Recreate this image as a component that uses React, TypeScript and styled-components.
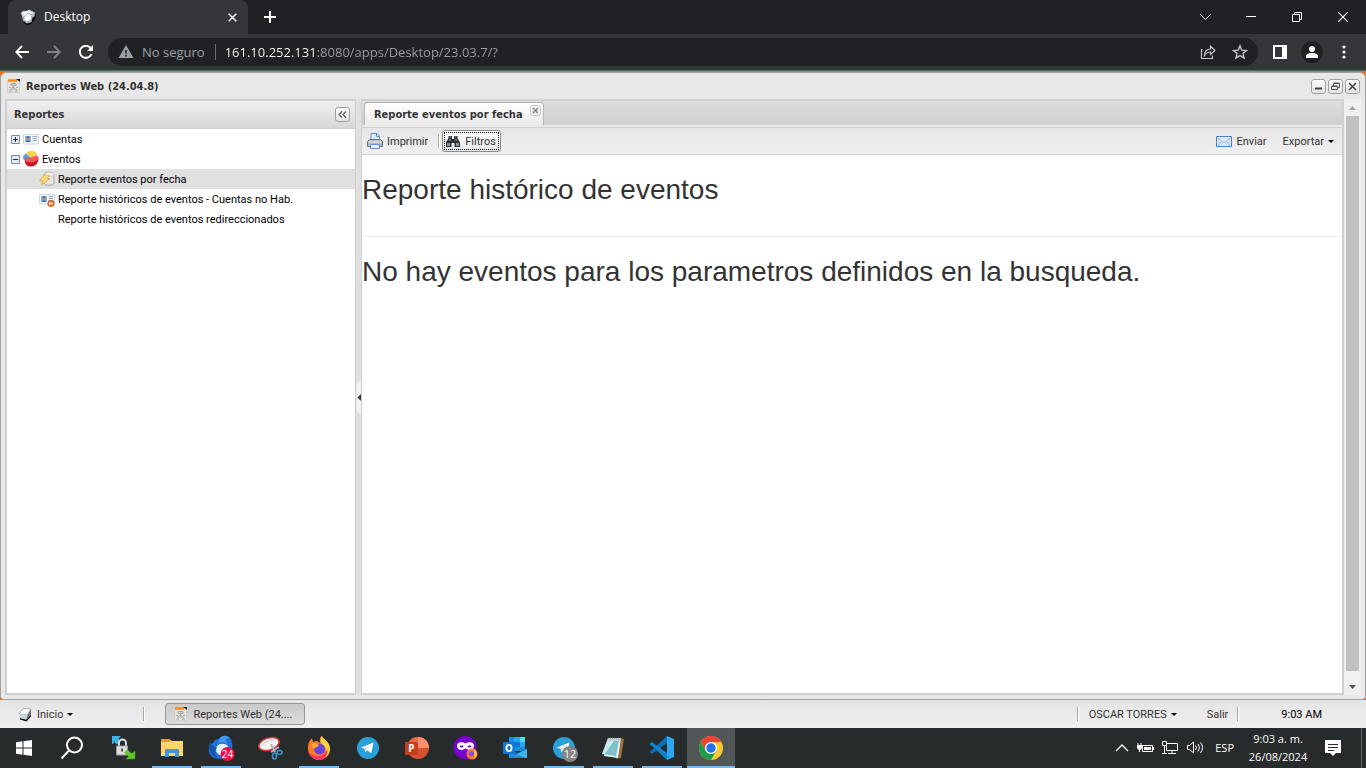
import React from "react";
import styled, { createGlobalStyle, css } from "styled-components";

const ui = `Roboto, Tahoma, "Noto Sans", sans-serif`;
const uiBold = `"DejaVu Sans Condensed", "DejaVu Sans", sans-serif`;
const chromeFont = `"Open Sans", "Noto Sans", sans-serif`;

const GlobalStyle = createGlobalStyle`
  *, *::before, *::after { box-sizing: border-box; }
  body { margin: 0; background: #ff6a10; }
  button { border: 0; padding: 0; background: none; color: inherit; font: inherit; cursor: pointer; }
  svg { display: block; flex: none; }
`;

const Screen = styled.div`
  min-height: 100vh;
  display: flex;
  flex-direction: column;
  font: 11px/16px ${ui};
  color: #333;
`;

/* ---------- browser ---------- */

const TabStrip = styled.header`
  height: 34px;
  display: flex;
  padding-left: 8px;
  background: #202124;
  color: #fff;
  font-family: ${chromeFont};
`;

const BrowserTab = styled.div`
  width: 240px;
  display: flex;
  align-items: center;
  gap: 8px;
  padding: 0 10px 0 12px;
  border-radius: 8px 8px 0 0;
  background: #35363a;
  font-size: 12px;
  & > span { flex: 1; }
`;

const ChromeButton = styled.button<{ $w?: number }>`
  width: ${(p) => p.$w ?? 32}px;
  display: flex;
  align-items: center;
  justify-content: center;
`;

const Spacer = styled.div`
  flex: 1;
`;

const BrowserBar = styled.div`
  height: 37px;
  display: flex;
  align-items: stretch;
  padding: 0 6px;
  background: #35363a;
  border-bottom: 1px solid #56616a;
  font-family: ${chromeFont};
`;

const AddressBar = styled.div`
  flex: 1;
  height: 28px;
  margin: 4px 6px 0;
  padding: 0 2px 0 10px;
  display: flex;
  align-items: center;
  border-radius: 14px;
  background: #202124;
  color: #9aa0a6;
  font-size: 13px;
`;

const Insecure = styled.button`
  display: flex;
  align-items: center;
  gap: 8px;
`;

const AddressInput = styled.input`
  flex: 1;
  min-width: 0;
  height: 16px;
  margin-left: 10px;
  padding: 0 0 0 9px;
  border: 0;
  border-left: 1px solid #6b6e72;
  outline: 0;
  color: transparent;
  background: linear-gradient(to right, #fff 102px, #9aa0a6 102px);
  background-clip: text;
  font: 13px/16px ${chromeFont};
`;

const Avatar = styled.span`
  width: 22px;
  height: 22px;
  display: grid;
  place-items: center;
  border-radius: 50%;
  background: #202124;
`;

/* ---------- report window ---------- */

const Win = styled.main`
  flex: 1;
  margin-top: 1px;
  display: flex;
  flex-direction: column;
  padding: 0 4px 4px;
  background: #e8e8e8;
  border: 1px solid #a2a2a2;
  border-radius: 6px 6px 4px 4px;
`;

const WinHeader = styled.div`
  height: 26px;
  display: flex;
  align-items: center;
  gap: 4px;
  padding: 0 1px;
`;

const WinTitle = styled.h1`
  flex: 1;
  margin: 0;
  padding-top: 1px;
  font: bold 11px/16px ${uiBold};
`;

const ToolButton = styled.button`
  width: 15px;
  height: 15px;
  display: grid;
  place-items: center;
  border: 1px solid #a0a0a0;
  border-radius: 3px;
  background: linear-gradient(#fff, #e2e2e2);
`;

const WinTools = styled.div`
  display: flex;
  gap: 2px;
`;

const WinBody = styled.div`
  flex: 1;
  display: flex;
`;

const Side = styled.aside`
  width: 351px;
  display: flex;
  flex-direction: column;
  border: 2px solid #d0d0d0;
  border-right-width: 1px;
  background: #fff;
`;

const SideHeader = styled.div`
  height: 28px;
  display: flex;
  align-items: center;
  justify-content: space-between;
  padding: 0 5px 0 7px;
  border-bottom: 1px solid #d0d0d0;
  background: linear-gradient(#f0f0f0, #d7d7d7);
`;

const SideTitle = styled.h2`
  margin: 0;
  font: bold 11px/16px ${uiBold};
`;

const Tree = styled.ul`
  margin: 0;
  padding: 0;
  list-style: none;
  color: #000;
`;

const TreeRow = styled.li<{ $level?: number; $selected?: boolean }>`
  height: 20px;
  display: flex;
  align-items: center;
  padding-left: ${(p) => (p.$level ? 32 : 4)}px;
  background: ${(p) => (p.$selected ? "#e0e0e0" : "none")};
`;

const Label = styled.span`
  padding-top: 2px;
  overflow: hidden;
  white-space: nowrap;
`;

const Expander = styled.button`
  width: 9px;
  height: 9px;
  margin-right: 3px;
`;

const IconSlot = styled.span`
  width: 16px;
  height: 16px;
  margin-right: 3px;
`;

const Splitter = styled.div`
  width: 5px;
  display: flex;
  align-items: center;
  justify-content: flex-end;
  background: #e0e0e0;
`;

const Collapse = styled.button`
  width: 4px;
  height: 35px;
`;

const Report = styled.section`
  flex: 1;
  min-width: 0;
  display: flex;
  flex-direction: column;
  border: 2px solid #d0d0d0;
  border-left-width: 1px;
  background: #fff;
`;

const ReportTabs = styled.div`
  height: 27px;
  display: flex;
  align-items: flex-start;
  padding: 1px 2px 0;
  border-bottom: 1px solid #d0d0d0;
  background: linear-gradient(#dedede, #cfcfcf 23px, #d0d0d0 24px, #eaeaea 24px);
`;

const ReportTab = styled.div`
  width: 180px;
  height: 23px;
  display: flex;
  align-items: flex-start;
  justify-content: space-between;
  padding: 0 2px 0 9px;
  border: 1px solid #b5b5b5;
  border-bottom: 0;
  border-radius: 4px 4px 0 0;
  background: linear-gradient(#fff, #eaeaea);
  font: bold 11px/16px ${uiBold};
  & > span { padding-top: 4px; }
`;

const TabClose = styled.button`
  width: 11px;
  height: 11px;
  margin-top: 2px;
`;

const Toolbar = styled.div`
  height: 27px;
  display: flex;
  align-items: center;
  padding: 0 8px 0 5px;
  border-bottom: 1px solid #d0d0d0;
  background: linear-gradient(#e6e6e6, #f0f0f0);
`;

const Action = styled.button<{ $focus?: boolean }>`
  height: 22px;
  display: flex;
  align-items: center;
  gap: 4px;
  ${(p) =>
    p.$focus &&
    css`
      gap: 5px;
      padding: 0 4px 0 3px;
      border: 1px solid #8c8c8c;
      border-radius: 3px;
      background: linear-gradient(#fff, #e9e9e9);
      outline: 1px dotted #000;
      outline-offset: -3px;
    `}
`;

const Divider = styled.span<{ $left?: number; $right?: number }>`
  width: 2px;
  height: 14px;
  margin: 0 ${(p) => p.$right ?? 0}px 0 ${(p) => p.$left ?? 0}px;
  border-left: 1px solid #aca899;
  border-right: 1px solid #fff;
`;

const Group = styled.div<{ $gap: number }>`
  display: flex;
  align-items: center;
  gap: ${(p) => p.$gap}px;
`;

const Document = styled.article`
  padding-top: 17px;
  font-family: "Liberation Sans", Arial, sans-serif;
`;

const Heading = styled.h2`
  margin: 0;
  font-weight: 400;
  font-size: 28px;
  line-height: 36px;
`;

const Rule = styled.hr`
  margin: 28px 0 17px;
  border: 0;
  border-top: 1px solid #eee;
`;

const ScrollTrack = styled.div`
  width: 17px;
  display: flex;
  flex-direction: column;
  align-items: center;
  background: #f0f0f0;
`;

const ScrollArrow = styled.button`
  width: 17px;
  height: 17px;
  display: grid;
  place-items: center;
`;

const Thumb = styled.div`
  flex: 1;
  width: 13px;
  margin-bottom: 7px;
  background: #c1c1c1;
`;

/* ---------- web desktop bar ---------- */

const DesktopBar = styled.nav`
  height: 28px;
  display: flex;
  align-items: center;
  padding: 0 44px 0 17px;
  background: linear-gradient(#e4e4e4, #f0f0f0);
`;

const WindowButton = styled(Action)`
  width: 140px;
  padding: 0 7px;
  border: 1px solid #969696;
  border-radius: 3px;
  background: linear-gradient(#c9c9c9, #dcdcdc);
`;

const Clock = styled.time`
  padding-top: 2px;
  color: #000;
`;

/* ---------- system bar ---------- */

const SystemBar = styled.footer`
  height: 40px;
  display: flex;
  background: #272b2c;
  color: #fff;
  font: 11px/18px ${chromeFont};
`;

const Apps = styled.div`
  display: flex;
  margin-left: 3px;
  gap: 1px;
`;

const AppButton = styled.button<{ $open?: boolean; $active?: boolean }>`
  width: 48px;
  height: 40px;
  display: grid;
  place-items: center;
  background: ${(p) =>
    p.$active
      ? "linear-gradient(#76b9ed, #76b9ed) bottom / 48px 2px no-repeat #515657"
      : p.$open
        ? "linear-gradient(#76b9ed, #76b9ed) bottom / 40px 2px no-repeat"
        : "none"};
`;

const Tray = styled.div`
  display: flex;
  align-items: center;
  gap: 8px;
`;

const Language = styled.span`
  margin-left: 3px;
`;

const SystemClock = styled.time`
  width: 64px;
  margin: 2px 13px 0 12px;
  text-align: center;
`;

const ShowDesktop = styled.button`
  width: 5px;
  margin-left: 18px;
  border-left: 1px solid #6a6d6e;
`;

/* ---------- icons ---------- */

const Caret = () => (
  <svg width="6" height="3" viewBox="0 0 6 3"><path d="M0 0h6L3 3z" fill="#000" /></svg>
);

const ReportIcon = () => (
  <svg width="16" height="16" viewBox="0 0 16 16">
    <path d="M1.500 2.500h12v12h-12z" fill="#e4e4e4" stroke="#cfcfcf" />
    <path d="M2 2.500h9" stroke="#ff8c00" strokeWidth="2.500" />
    <path d="M10 1h4v3z" fill="#222" />
    <path d="M5 5.500h5v2H5zM7.500 7v2.500M4 12l3-3 4 3M3 9.500h2M10 9.500h2M3 13h3M9 13h3" fill="#ccc" stroke="#a8a8a8" />
  </svg>
);

const CubeIcon = () => (
  <svg width="16" height="16" viewBox="0 0 16 16">
    <path d="M3 12l6 1.500 5-5v2l-4.500 5L3 13.500z" fill="#111" />
    <path d="M6 2.500l8 .500-3.500 6L2 8z" fill="#fbfdfd" stroke="#8c9799" strokeWidth=".7" />
    <path d="M2 8l8.500 1-1 4.500L3 12z" fill="#cbd4d6" />
    <path d="M10.500 9L14 3v5.500l-4.500 5z" fill="#6d797c" />
  </svg>
);

const Favicon = () => (
  <svg width="16" height="16" viewBox="0 0 16 16">
    <path d="M4 8l8-4 4 1-1 5-4 5-4 1-3-2z" fill="#050505" />
    <path d="M.500 4l3-2.500 3 .500L9 .500l3 1.500 3 1.500-.500 4-2 1-1 4.500-4.500 1.500-4-3L2 7z" fill="#b7c4c9" />
    <path d="M2 3.500l4-1L9 1.500l4 2.500-1 2-4-1.500L4 8z" fill="#eef6f8" />
    <path d="M4 8l4-4 4 2-1 5-4 2-3-2z" fill="#fff" stroke="#7f8f95" strokeWidth=".7" />
  </svg>
);

const CardIcon = ({ blocked }: { blocked?: boolean }) => (
  <svg width="16" height="16" viewBox="0 0 16 16">
    <path d="M.500 3.500h15v9.500H.500z" fill="#f7fafd" stroke="#cbd7e5" />
    <path d="M2 5h6v6H2z" fill="#7db4ee" />
    <circle cx="5" cy="7.500" r="1.500" fill="#d58a52" />
    <path d="M3 11c0-2.500 4-2.500 4 0z" fill="#3c6bb5" />
    <path d="M3.500 6.500c0-1.500 3-1.500 3 0z" fill="#2b2a33" />
    <path d="M9.500 5.500H14M9.500 7.500H14M9.500 9.500H14" stroke="#93aac9" />
    {blocked && (
      <>
        <circle cx="12" cy="12.500" r="3.300" fill="#ee7430" stroke="#b94712" strokeWidth=".5" />
        <path d="M10 12.500h4" stroke="#fff" strokeWidth="1.500" />
      </>
    )}
  </svg>
);

const PieIcon = () => (
  <svg width="16" height="16" viewBox="0 0 16 16">
    <path d="M1.500 7c0 5 1.500 8.500 6.500 8.500S15.500 12 15.500 6z" fill="#c5161b" />
    <path d="M1.500 7.500L8 6.500 14 4c3 4-1 7.500-5 7.500S1.500 10.500 1.500 7.500z" fill="#f8585a" />
    <path d="M8 6.500L4 1.500c3-1.500 7.500-1.200 9.500 1.300z" fill="#ffd83c" stroke="#e8a80e" strokeWidth=".6" />
    <path d="M7 6.500L3.200 2.800C1 3.800 0 5.500 .500 8z" fill="#5aa3dc" stroke="#397fb9" strokeWidth=".5" />
  </svg>
);

const BoltIcon = () => (
  <svg width="16" height="16" viewBox="0 0 16 16">
    <path d="M5 3.500c0-3 10-3 10 0v8.500c0 3-10 3-10 0z" fill="#e6e6e6" stroke="#a5a5a5" />
    <ellipse cx="10" cy="3.500" rx="4.800" ry="2" fill="#fafafa" stroke="#bbb" strokeWidth=".6" />
    <path d="M5 4h5.500L8 7.500h3L2.500 14l1.500-4H.500z" fill="#fbdc7c" stroke="#dba63a" strokeWidth=".8" />
  </svg>
);

const ExpandIcon = ({ open }: { open?: boolean }) => (
  <svg width="9" height="9" viewBox="0 0 9 9">
    <path d="M.500.500h8v8h-8z" fill="#e6ebf3" stroke="#7b8ba6" />
    <path d={open ? "M2 4.500h5" : "M2 4.500h5M4.500 2v5"} stroke="#1c2d4d" />
  </svg>
);

const PrintIcon = () => (
  <svg width="16" height="16" viewBox="0 0 16 16">
    <path d="M4 7V.500h6L12.500 3v4z" fill="#dcecff" stroke="#5f93d4" />
    <path d="M9.500 1v2.500h3" fill="none" stroke="#5f93d4" />
    <path d="M2.500 6.500h11l2 2v5h-15v-5z" fill="#b9bbc0" stroke="#6f7279" />
    <path d="M2 9h12" stroke="#eee" />
    <path d="M3.500 11.500h9v4h-9z" fill="#e8f2ff" stroke="#5f93d4" />
  </svg>
);

const BinocularsIcon = () => (
  <svg width="14" height="13" viewBox="0 0 14 13">
    <path d="M2.500 1H6v3h2V1h3.500v2L13 6l1 1v5H8.500V8h-3v4H0V7l1-1 1.500-3z" fill="#2c3137" />
    <path d="M1 8h3v3H1zM10 8h3v3h-3z" fill="#8694a0" />
    <path d="M3.500 2H5M9 2h1.500M3 5h2M9 5h2" stroke="#a4afb8" />
  </svg>
);

const MailIcon = () => (
  <svg width="16" height="11" viewBox="0 0 16 11">
    <path d="M.500.500h15v10H.500z" fill="#dbe9fd" stroke="#4c7fc4" />
    <path d="M1.500 1.500L8 7l6.500-5.500M1.500 9.500L6 5.500M14.500 9.500L10 5.500" fill="none" stroke="#8fb5e6" />
  </svg>
);

const Telegram = ({ badge }: { badge?: string }) => (
  <svg width="28" height="28" viewBox="0 0 28 28">
    <circle cx="14" cy="14" r="11" fill="#2a9fd8" />
    <path d="M6.500 13.800l13-5.300-2.200 10.800-4-3-2.100 2-.5-3.600z" fill="#fff" />
    <path d="M10.700 14.700L17 10.500l-5 5-.8 2.800z" fill="#b9d8eb" />
    {badge && (
      <>
        <circle cx="20" cy="20" r="8" fill="#858585" />
        <text x="20" y="24" textAnchor="middle" fontSize="11" fill="#fff">{badge}</text>
      </>
    )}
  </svg>
);

const appIcons: { name: string; open?: boolean; active?: boolean; icon: React.ReactNode }[] = [
  {
    name: "Acceso remoto",
    icon: (
      <svg width="26" height="26" viewBox="0 0 26 26">
        <path d="M2 1h9L8.500 3.500l2 2.500-3.500 3.500L4.500 7 2 9.500z" fill="#3cb6e8" />
        <path d="M9 12V8a3.500 3.500 0 017 0v4" fill="none" stroke="#d9dbdd" strokeWidth="2" />
        <path d="M6.500 11h11v9h-11z" fill="#dedede" stroke="#999" />
        <path d="M12 13.500v3" stroke="#555" strokeWidth="2" />
        <path d="M25 24h-9l2.500-2.500-4-4 3-3 4 4L25 16z" fill="#62c72c" stroke="#3f9418" strokeWidth=".5" />
      </svg>
    ),
  },
  {
    name: "Explorador de archivos",
    open: true,
    icon: (
      <svg width="22" height="20" viewBox="0 0 22 20">
        <path d="M0 2h9l2 1h11v15H0z" fill="#ffd66c" />
        <path d="M0 1h9l1 2-1 1H0z" fill="#e0a11b" />
        <path d="M4 19v-7q0-1 1-1h12q1 0 1 1v7h-4v-4H8v4z" fill="#3c96dc" />
      </svg>
    ),
  },
  {
    name: "Thunderbird",
    open: true,
    icon: (
      <svg width="28" height="28" viewBox="0 0 28 28">
        <path d="M3 8l2 2 3-4 4-1 4-3c4-1 8 2 9 6 2 8-3 17-12 17S0 19 2.500 12z" fill="#1f72d5" />
        <path d="M3 8c-2 9 2 15 8 16-3-3-4-6-2-10L5 11z" fill="#1552ae" />
        <path d="M12 5c3-4 8-4 11-1-2 0-4 1-5 2l4 6c-3-4-7-5-11-3z" fill="#3f9bf0" />
        <path d="M10 12c3-3 8-3 11 0l-4 9c-4 1-7-1-8-4z" fill="#e7f3ff" />
        <circle cx="20.500" cy="20" r="7" fill="#e8134b" />
        <text x="20.500" y="24" textAnchor="middle" fontSize="10" fill="#fff">24</text>
      </svg>
    ),
  },
  {
    name: "Recortes",
    icon: (
      <svg width="26" height="26" viewBox="0 0 26 26">
        <ellipse cx="12" cy="9" rx="10.500" ry="6" transform="rotate(-18 12 9)" fill="#f4f4f4" stroke="#dc3438" strokeWidth="1.500" />
        <path d="M5 10c4-4 9-5 13-4" fill="none" stroke="#ccc" />
        <path d="M14 9l4 8M22 12l-8 5" stroke="#aeb6bd" strokeWidth="2" />
        <ellipse cx="17.500" cy="21" rx="2" ry="3" fill="none" stroke="#3d95ca" strokeWidth="1.600" />
        <ellipse cx="22.500" cy="17.500" rx="2.500" ry="2" fill="none" stroke="#3d95ca" strokeWidth="1.600" />
      </svg>
    ),
  },
  {
    name: "Firefox",
    open: true,
    icon: (
      <svg width="26" height="26" viewBox="0 0 26 26">
        <path d="M3 7l3-4 1 4 3-1c2 0 3 1 4 2 0-3-1-5 2-7 1 4 8 5 8 13 0 6-5 11-11 11S2 20 2 14c0-3 0-5 1-7z" fill="#ff7b25" />
        <path d="M16 1c1 4 8 5 8 13 0 4-3 8-6 9 3-5 3-10-1-13-3-3-3-6-1-9z" fill="#ffd53a" />
        <path d="M2 14c1 5 6 8 11 7 6-1 8-5 8-8 2 7-3 12-8 12S2 21 2 14z" fill="#fb3465" />
        <circle cx="13.500" cy="14" r="5.500" fill="#6847d8" />
        <path d="M6 9c3-2 5 0 7 1-1 3-4 1-4 4-2-1-3-3-3-5z" fill="#ffad2d" />
      </svg>
    ),
  },
  { name: "Telegram", icon: <Telegram /> },
  {
    name: "PowerPoint",
    icon: (
      <svg width="26" height="24" viewBox="0 0 26 24">
        <circle cx="14" cy="12" r="11" fill="#d35230" />
        <path d="M14 1a11 11 0 0111 11H14z" fill="#ff8f6b" />
        <path d="M14 1v11h-11A11 11 0 0114 1z" fill="#ed6c47" />
        <rect x="1" y="6" width="13" height="13" rx="1" fill="#c43e1c" />
        <text x="7.500" y="16" textAnchor="middle" fontSize="10" fontWeight="700" fill="#fff">P</text>
      </svg>
    ),
  },
  {
    name: "Firefox privado",
    icon: (
      <svg width="26" height="26" viewBox="0 0 26 26">
        <circle cx="12" cy="12.500" r="11.500" fill="#7803cf" />
        <path d="M4 11c0-5 6-4 8.500-2.500C15 7 21 6 21 11c0 4.500-6 5.500-8.500 2C10 16.500 4 15.500 4 11z" fill="#fff" />
        <ellipse cx="8.500" cy="11.500" rx="2" ry="1" fill="#7803cf" />
        <ellipse cx="16.500" cy="11.500" rx="2" ry="1" fill="#7803cf" />
        <circle cx="19" cy="19" r="5.500" fill="#ff7135" />
        <path d="M19 13c5 2 7 7 2 11 0-3 2-7-2-11z" fill="#ffca3a" />
        <circle cx="18.500" cy="18.500" r="2.600" fill="#8650dd" />
      </svg>
    ),
  },
  {
    name: "Outlook",
    icon: (
      <svg width="26" height="24" viewBox="0 0 26 24">
        <path d="M7 1h16v14H7z" fill="#1490df" />
        <path d="M12 1h6v5h-6z" fill="#28a8ea" />
        <path d="M18 1h5v5h-5z" fill="#50d9ff" />
        <path d="M18 6h5v5h-5z" fill="#28a8ea" />
        <path d="M12 6h6v5h-6z" fill="#0f78d4" />
        <path d="M7 12l9 5 9-5v10H7z" fill="#1066b5" />
        <path d="M7 22l18-9v9z" fill="#35b8f1" />
        <path d="M7 22v-6l18 6z" fill="#1a8fdc" />
        <rect x="1" y="6" width="12" height="12" rx="1" fill="#0f78d4" />
        <ellipse cx="7" cy="12" rx="2.600" ry="3.200" fill="none" stroke="#fff" strokeWidth="1.800" />
      </svg>
    ),
  },
  { name: "Telegram 2", open: true, icon: <Telegram badge="12" /> },
  {
    name: "Bloc de notas",
    open: true,
    icon: (
      <svg width="26" height="24" viewBox="0 0 26 24">
        <path d="M21 2l3 1-3 19-5 1z" fill="#94713c" />
        <path d="M8 2h13l-3 20-14-2z" fill="#e9f2f4" />
        <path d="M8 2h13l-1 3H7z" fill="#c7cfd1" />
        <path d="M7 5h12l-3 15L2 18z" fill="#7cc1cc" />
        <path d="M7 5h7L5 18l-3 0z" fill="#c9e8ec" />
        <path d="M8 2h13" stroke="#606668" strokeDasharray="1 1" />
      </svg>
    ),
  },
  {
    name: "Visual Studio Code",
    open: true,
    icon: (
      <svg width="26" height="26" viewBox="0 0 26 26">
        <path d="M18 1L3 15l-2 1v1.500L3 19 18 8z" fill="#0a6fb6" />
        <path d="M18 25L3 11l-2-1V8.500L3 7l15 11z" fill="#0f83cb" />
        <path d="M18 1l7 3v18l-7 3z" fill="#2aa7ef" />
      </svg>
    ),
  },
  {
    name: "Chrome",
    active: true,
    icon: (
      <svg width="24" height="24" viewBox="0 0 24 24">
        <circle cx="12" cy="12" r="12" fill="#fcc934" />
        <path d="M1.600 6A12 12 0 0122.400 6H12v6l-5.200 3z" fill="#ea4335" />
        <path d="M1.600 6A12 12 0 0012 24l5.200-9L12 12l-5.200 3z" fill="#1e9e4a" />
        <circle cx="12" cy="12" r="6" fill="#fff" />
        <circle cx="12" cy="12" r="4.700" fill="#1a73e8" />
      </svg>
    ),
  },
];

const line = { fill: "none", stroke: "#fff" };

export default function App() {
  return (
    <Screen>
      <GlobalStyle />
      <TabStrip>
        <BrowserTab>
          <Favicon />
          <span>Desktop</span>
          <ChromeButton $w={12} aria-label="Cerrar pestaña">
            <svg width="9" height="9" viewBox="0 0 9 9"><path d="M.700.700l7.600 7.600M8.300.700L.700 8.300" {...line} strokeWidth="1.500" /></svg>
          </ChromeButton>
        </BrowserTab>
        <ChromeButton $w={44} aria-label="Nueva pestaña">
          <svg width="12" height="12" viewBox="0 0 12 12"><path d="M6 0v12M0 6h12" {...line} strokeWidth="2" /></svg>
        </ChromeButton>
        <Spacer />
        <ChromeButton $w={46} aria-label="Buscar pestañas">
          <svg width="11" height="6" viewBox="0 0 11 6"><path d="M.500.500l5 5 5-5" {...line} /></svg>
        </ChromeButton>
        <ChromeButton $w={46} aria-label="Minimizar">
          <svg width="10" height="2" viewBox="0 0 10 2"><path d="M0 .500h10" {...line} /></svg>
        </ChromeButton>
        <ChromeButton $w={46} aria-label="Restaurar">
          <svg width="10" height="10" viewBox="0 0 10 10"><path d="M.500 2.500h7v7h-7zM2.500 2V.500h7v7H8" {...line} /></svg>
        </ChromeButton>
        <ChromeButton $w={46} aria-label="Cerrar">
          <svg width="10" height="10" viewBox="0 0 10 10"><path d="M0 0l10 10M10 0L0 10" {...line} strokeWidth="1.200" /></svg>
        </ChromeButton>
      </TabStrip>
      <BrowserBar>
        <ChromeButton aria-label="Atrás">
          <svg width="14" height="14" viewBox="0 0 14 14"><path d="M14 7H1.500M7 1L1.200 7 7 13" {...line} strokeWidth="1.800" /></svg>
        </ChromeButton>
        <ChromeButton aria-label="Adelante">
          <svg width="14" height="14" viewBox="0 0 14 14"><path d="M0 7h12.500M7 1l5.800 6L7 13" fill="none" stroke="#808184" strokeWidth="1.800" /></svg>
        </ChromeButton>
        <ChromeButton aria-label="Recargar">
          <svg width="14" height="14" viewBox="0 0 14 14"><path d="M12.500 9A6 6 0 1111.500 3" {...line} strokeWidth="2" /><path d="M14 0v6H8z" fill="#fff" /></svg>
        </ChromeButton>
        <AddressBar>
          <Insecure>
            <svg width="16" height="14" viewBox="0 0 16 14"><path d="M8 0l7.500 13H.500z" fill="#9aa0a6" /><path d="M8 5v3.500M8 9.800v1.600" stroke="#202124" strokeWidth="1.600" /></svg>
            No seguro
          </Insecure>
          <AddressInput aria-label="Dirección" defaultValue="161.10.252.131:8080/apps/Desktop/23.03.7/?" />
          <ChromeButton aria-label="Compartir">
            <svg width="16" height="16" viewBox="0 0 16 16"><path d="M2.500 5.500H1.500v9h11V11.500" fill="none" stroke="#c4c6c9" strokeWidth="1.200" /><path d="M4.500 11.500c0-4 2-6.500 6-6.500V2.200L15 6.500l-4.500 4V8C8 8 6 9 4.500 11.500z" fill="none" stroke="#c4c6c9" strokeWidth="1.200" /></svg>
          </ChromeButton>
          <ChromeButton aria-label="Marcar página">
            <svg width="16" height="16" viewBox="0 0 16 16"><path d="M8 1.800l1.800 4.300 4.700.400-3.600 3 1.200 4.600L8 11.600l-4.100 2.500 1.200-4.600-3.600-3 4.700-.400z" fill="none" stroke="#c4c6c9" strokeWidth="1.400" /></svg>
          </ChromeButton>
        </AddressBar>
        <ChromeButton aria-label="Panel lateral">
          <svg width="14" height="14" viewBox="0 0 14 14"><path d="M1 1h12v12H1z" {...line} strokeWidth="2" /><path d="M9 1h4v12H9z" fill="#fff" /></svg>
        </ChromeButton>
        <ChromeButton aria-label="Perfil">
          <Avatar>
            <svg width="12" height="12" viewBox="0 0 12 12"><circle cx="6" cy="3" r="3" fill="#fff" /><path d="M0 12V10c0-4 12-4 12 0v2z" fill="#fff" /></svg>
          </Avatar>
        </ChromeButton>
        <ChromeButton aria-label="Menú">
          <svg width="4" height="14" viewBox="0 0 4 14" fill="#fff"><circle cx="2" cy="2" r="1.600" /><circle cx="2" cy="7" r="1.600" /><circle cx="2" cy="12" r="1.600" /></svg>
        </ChromeButton>
      </BrowserBar>

      <Win>
        <WinHeader>
          <ReportIcon />
          <WinTitle>Reportes Web (24.04.8)</WinTitle>
          <WinTools>
            <ToolButton aria-label="Minimizar ventana">
              <svg width="9" height="9" viewBox="0 0 9 9"><path d="M1 6.500h7" stroke="#444" strokeWidth="2" /></svg>
            </ToolButton>
            <ToolButton aria-label="Restaurar ventana">
              <svg width="9" height="9" viewBox="0 0 9 9"><path d="M.500 4.500h6v3h-6zM2.500 4V1.500h6v4H7M.500 4h6M2.500 1h6" fill="none" stroke="#555" /></svg>
            </ToolButton>
            <ToolButton aria-label="Cerrar ventana">
              <svg width="9" height="9" viewBox="0 0 9 9"><path d="M1 1l7 7M8 1L1 8" stroke="#444" strokeWidth="1.500" /></svg>
            </ToolButton>
          </WinTools>
        </WinHeader>
        <WinBody>
          <Side>
            <SideHeader>
              <SideTitle>Reportes</SideTitle>
              <ToolButton aria-label="Contraer panel">
                <svg width="9" height="7" viewBox="0 0 9 7"><path d="M4 .500l-3 3 3 3M8 .500l-3 3 3 3" fill="none" stroke="#555" strokeWidth="1.200" /></svg>
              </ToolButton>
            </SideHeader>
            <Tree>
              <TreeRow>
                <Expander aria-label="Expandir Cuentas"><ExpandIcon /></Expander>
                <IconSlot><CardIcon /></IconSlot>
                <Label>Cuentas</Label>
              </TreeRow>
              <TreeRow>
                <Expander aria-label="Contraer Eventos"><ExpandIcon open /></Expander>
                <IconSlot><PieIcon /></IconSlot>
                <Label>Eventos</Label>
              </TreeRow>
              <TreeRow $level={1} $selected>
                <IconSlot><BoltIcon /></IconSlot>
                <Label>Reporte eventos por fecha</Label>
              </TreeRow>
              <TreeRow $level={1}>
                <IconSlot><CardIcon blocked /></IconSlot>
                <Label>Reporte históricos de eventos - Cuentas no Hab.</Label>
              </TreeRow>
              <TreeRow $level={1}>
                <IconSlot />
                <Label>Reporte históricos de eventos redireccionados</Label>
              </TreeRow>
            </Tree>
          </Side>
          <Splitter>
            <Collapse aria-label="Contraer">
              <svg width="4" height="35" viewBox="0 0 4 35"><path d="M4 0L0 4v27l4 4z" fill="#f4f4f4" /><path d="M4 14v7L.500 17.500z" fill="#333" /></svg>
            </Collapse>
          </Splitter>
          <Report>
            <ReportTabs>
              <ReportTab>
                <span>Reporte eventos por fecha</span>
                <TabClose aria-label="Cerrar reporte">
                  <svg width="11" height="11" viewBox="0 0 11 11"><rect x=".5" y=".5" width="10" height="10" rx="2" fill="#f4f4f4" stroke="#c4c4c4" /><path d="M3 3l5 5M8 3L3 8" stroke="#999" strokeWidth="2" /></svg>
                </TabClose>
              </ReportTab>
            </ReportTabs>
            <Toolbar>
              <Action><PrintIcon /><Label>Imprimir</Label></Action>
              <Divider $left={10} $right={2} />
              <Action $focus><BinocularsIcon /><Label>Filtros</Label></Action>
              <Spacer />
              <Group $gap={16}>
                <Action><MailIcon /><Label>Enviar</Label></Action>
                <Action><Label>Exportar</Label><Caret /></Action>
              </Group>
            </Toolbar>
            <Document>
              <Heading>Reporte histórico de eventos</Heading>
              <Rule />
              <Heading>No hay eventos para los parametros definidos en la busqueda.</Heading>
            </Document>
          </Report>
          <ScrollTrack>
            <ScrollArrow aria-label="Subir"><svg width="7" height="4" viewBox="0 0 7 4"><path d="M0 4h7L3.500 0z" fill="#a3a3a3" /></svg></ScrollArrow>
            <Thumb />
            <ScrollArrow aria-label="Bajar"><svg width="7" height="4" viewBox="0 0 7 4"><path d="M0 0h7L3.500 4z" fill="#505050" /></svg></ScrollArrow>
          </ScrollTrack>
        </WinBody>
      </Win>

      <DesktopBar>
        <Action><CubeIcon /><Label>Inicio</Label><Caret /></Action>
        <Divider $left={70} $right={20} />
        <WindowButton><ReportIcon /><Label>Reportes Web (24....</Label></WindowButton>
        <Spacer />
        <Divider $right={10} />
        <Group $gap={30}>
          <Action><Label>OSCAR TORRES</Label><Caret /></Action>
          <Action><Label>Salir</Label></Action>
        </Group>
        <Divider $left={9} $right={42} />
        <Clock>9:03 AM</Clock>
      </DesktopBar>

      <SystemBar>
        <AppButton aria-label="Inicio de Windows">
          <svg width="16" height="16" viewBox="0 0 16 16"><path d="M0 2.200L6.500 1.300V7.500H0zM7.500 1.200L16 0v7.500H7.500zM0 8.500h6.500v6.200L0 13.800zM7.500 8.500H16V16l-8.500-1.200z" fill="#fff" /></svg>
        </AppButton>
        <AppButton aria-label="Buscar">
          <svg width="24" height="24" viewBox="0 0 24 24"><circle cx="14.500" cy="9" r="7.500" {...line} strokeWidth="2" /><path d="M9 14.500L1.500 22.500" {...line} strokeWidth="2" /></svg>
        </AppButton>
        <Apps>
          {appIcons.map((a) => (
            <AppButton key={a.name} aria-label={a.name} $open={a.open} $active={a.active}>
              {a.icon}
            </AppButton>
          ))}
        </Apps>
        <Spacer />
        <Tray>
          <svg width="14" height="8" viewBox="0 0 14 8"><path d="M1 7l6-6 6 6" {...line} strokeWidth="1.300" /></svg>
          <svg width="17" height="12" viewBox="0 0 17 12"><path d="M5.500 3.500h10v6h-10z" {...line} /><path d="M7 5h7v3H7zM16 5h1v3h-1zM0 3h5v3L3.500 8h-2L0 6z" fill="#fff" /><path d="M1 1v2M4 1v2M2.500 8v2" {...line} /></svg>
          <svg width="17" height="14" viewBox="0 0 17 14"><path d="M4.500 2.500h11v7h-11zM10 10v3M6 12.500h8M.500.500h4v4h-4zM2.500 5v8M0 12.500h5" {...line} /></svg>
          <svg width="17" height="14" viewBox="0 0 17 14"><path d="M.500 4.500h2L6.500 1v11L2.500 8.500h-2zM8.500 4.500q2 2.200 0 4.500M11 3q3 3.700 0 7.500M13.500 1.500q4 5 0 10.500" {...line} /></svg>
          <Language>ESP</Language>
        </Tray>
        <SystemClock>
          9:03 a. m.
          <br />
          26/08/2024
        </SystemClock>
        <ChromeButton $w={20} aria-label="Notificaciones">
          <svg width="16" height="16" viewBox="0 0 16 16"><path d="M0 0h16v13h-5l-3 3-3-3H0z" fill="#fff" /><path d="M3 4.500h10M3 7.500h10M3 10.500h6" stroke="#272b2c" /></svg>
        </ChromeButton>
        <ShowDesktop aria-label="Mostrar escritorio" />
      </SystemBar>
    </Screen>
  );
}
